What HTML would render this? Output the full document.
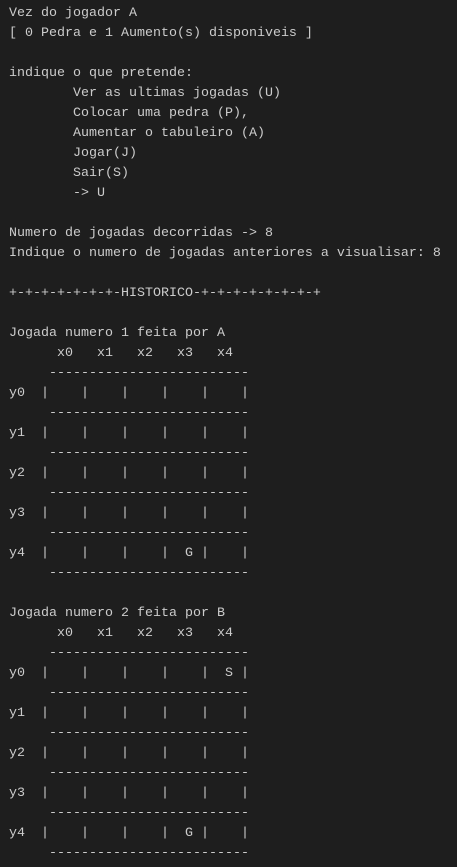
<!DOCTYPE html>
<html><head><meta charset="utf-8"><style>
html,body{margin:0;padding:0;background:#1e1e1e;width:457px;height:867px;overflow:hidden}
pre{margin:0;position:absolute;left:9px;top:4px;font-family:"Liberation Mono",monospace;font-size:13.33px;line-height:20px;color:#cccccc;tab-size:8}
</style></head><body><pre>Vez do jogador A
[ 0 Pedra e 1 Aumento(s) disponiveis ]

indique o que pretende:
        Ver as ultimas jogadas (U)
        Colocar uma pedra (P),
        Aumentar o tabuleiro (A)
        Jogar(J)
        Sair(S)
        -> U

Numero de jogadas decorridas -> 8
Indique o numero de jogadas anteriores a visualisar: 8

+-+-+-+-+-+-+-HISTORICO-+-+-+-+-+-+-+-+

Jogada numero 1 feita por A
      x0   x1   x2   x3   x4
     -------------------------
y0  |    |    |    |    |    |
     -------------------------
y1  |    |    |    |    |    |
     -------------------------
y2  |    |    |    |    |    |
     -------------------------
y3  |    |    |    |    |    |
     -------------------------
y4  |    |    |    |  G |    |
     -------------------------

Jogada numero 2 feita por B
      x0   x1   x2   x3   x4
     -------------------------
y0  |    |    |    |    |  S |
     -------------------------
y1  |    |    |    |    |    |
     -------------------------
y2  |    |    |    |    |    |
     -------------------------
y3  |    |    |    |    |    |
     -------------------------
y4  |    |    |    |  G |    |
     -------------------------
</pre></body></html>
